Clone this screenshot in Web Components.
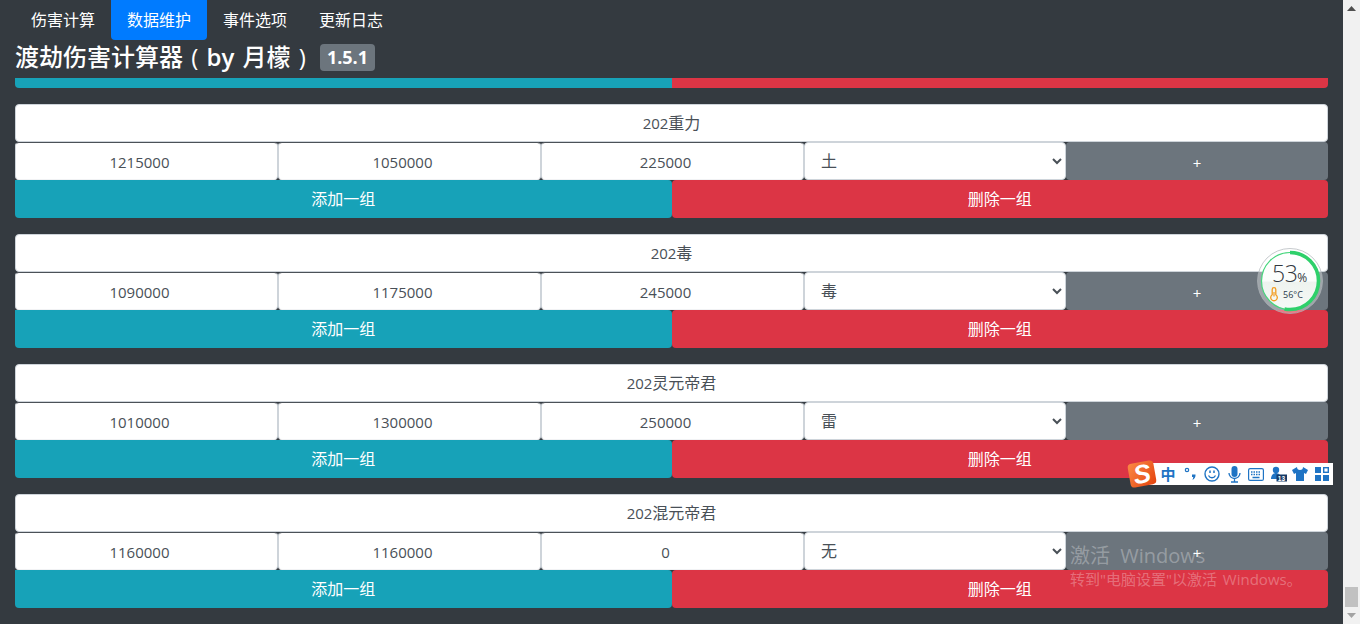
<!DOCTYPE html>
<html>
<head>
<meta charset="utf-8">
<title>渡劫伤害计算器</title>
<style>
  html, body { margin: 0; height: 100%; overflow: hidden; background: #343a40; }
  body { font-family: "Open Sans", "Noto Sans CJK SC", sans-serif; }
  #page { display: flex; height: 624px; }
  #main { flex: 1; min-width: 0; padding: 0 15px; overflow: hidden; }
</style>
</head>
<body>
<div id="page">
  <div id="main">
    <nav-tabs></nav-tabs>
    <page-title></page-title>
    <cut-bar></cut-bar>
    <boss-group level="202" name="重力" a="1215000" b="1050000" c="225000" el="土"></boss-group>
    <boss-group level="202" name="毒" a="1090000" b="1175000" c="245000" el="毒"></boss-group>
    <boss-group level="202" name="灵元帝君" a="1010000" b="1300000" c="250000" el="雷"></boss-group>
    <boss-group level="202" name="混元帝君" a="1160000" b="1160000" c="0" el="无"></boss-group>
  </div>
  <fake-scrollbar></fake-scrollbar>
</div>
<temp-widget></temp-widget>
<ime-bar></ime-bar>
<activate-mark></activate-mark>

<script>
class NavTabs extends HTMLElement {
  constructor() {
    super();
    this.attachShadow({ mode: "open" });
    this.shadowRoot.innerHTML = `
      <style>
        :host { display: flex; height: 40px; color: #fff; font-size: 16px; }
        a { display: block; padding: 0 16px; line-height: 40px; border-radius: 0 0 4px 4px; }
        a.active { background: #007bff; }
      </style>
      <a>伤害计算</a><a class="active">数据维护</a><a>事件选项</a><a>更新日志</a>
    `;
  }
}
customElements.define("nav-tabs", NavTabs);

class PageTitle extends HTMLElement {
  constructor() {
    super();
    this.attachShadow({ mode: "open" });
    this.shadowRoot.innerHTML = `
      <style>
        :host { box-sizing: border-box; display: flex; align-items: center; height: 38px; padding-bottom: 5px; color: #fff; font-size: 24px; font-weight: 500; word-spacing: 2px; white-space: pre; }
        .txt { position: relative; top: -1.5px; }
        b { font-weight: 600; }
        .ver { margin-left: 14px; position: relative; top: 1px; background: #6c757d; border-radius: 4px; font-size: 18px; font-weight: 700; line-height: 27px; padding: 0 7px; word-spacing: 0; }
      </style><span class="txt">渡劫伤害计算器 ( <b>by</b> 月檬 )</span><span class="ver">1.5.1</span>
    `;
  }
}
customElements.define("page-title", PageTitle);

class CutBar extends HTMLElement {
  constructor() {
    super();
    this.attachShadow({ mode: "open" });
    this.shadowRoot.innerHTML = `
      <style>
        :host { display: flex; height: 10px; margin-bottom: 16px; }
        div { flex: 1; }
        .l { background: #17a2b8; border-bottom-left-radius: 4px; }
        .r { background: #dc3545; border-bottom-right-radius: 4px; }
      </style>
      <div class="l"></div><div class="r"></div>
    `;
  }
}
customElements.define("cut-bar", CutBar);

class BossGroup extends HTMLElement {
  constructor() {
    super();
    this.attachShadow({ mode: "open" });
  }
  connectedCallback() {
    const v = (k) => this.getAttribute(k);
    this.shadowRoot.innerHTML = `
      <style>
        :host { display: block; margin-bottom: 16px; font-size: 16px; color: #495057; }
        .name, input, select, .plus, button { box-sizing: border-box; height: 38px; font: inherit; margin: 0; }
        .name { background: #fff; border: 1px solid #ced4da; border-radius: 4px; text-align: center; line-height: 36px; }
        .name span, input { font-size: 15px; }
        .row { display: grid; grid-template-columns: 263px 263px 263px 262px 262px; }
        input { width: 100%; min-width: 0; text-align: center; color: #495057; background: #fff; border: 1px solid #ced4da; border-top-color: #4b5157; border-bottom-color: #f1f2f4; border-radius: 4px; padding: 1px 26px 0 12px; }
        select { width: 100%; min-width: 0; color: #495057; background: #fff; border: 1px solid #ced4da; border-radius: 4px; padding: 0 12px; }
        .plus { background: #6c757d; color: #fff; text-align: center; line-height: 42px; border-radius: 4px; font-size: 15px; }
        .btns { display: grid; grid-template-columns: 1fr 1fr; }
        button { border: 0; color: #fff; padding: 0 0 2px; }
        .add { background: #17a2b8; border-radius: 0 4px 4px 4px; }
        .del { background: #dc3545; border-radius: 4px; }
      </style>
      <div class="name"><span>${v("level")}</span>${v("name")}</div>
      <div class="row">
        <input value="${v("a")}"><input value="${v("b")}"><input value="${v("c")}">
        <select><option>${v("el")}</option></select>
        <div class="plus">+</div>
      </div>
      <div class="btns"><button class="add">添加一组</button><button class="del">删除一组</button></div>
    `;
  }
}
customElements.define("boss-group", BossGroup);

class FakeScrollbar extends HTMLElement {
  constructor() {
    super();
    this.attachShadow({ mode: "open" });
    this.shadowRoot.innerHTML = `
      <style>
        :host { display: flex; flex-direction: column; justify-content: space-between; align-items: center; width: 17px; background: #f1f1f1; }
        .track { flex: 1; display: flex; flex-direction: column; justify-content: flex-end; width: 100%; }
        .thumb { height: 20px; margin: 0 2px; background: #c1c1c1; }
        svg { display: block; margin: 6px 0; }
      </style>
      <svg width="9" height="5"><path d="M0 5 4.500 0 9 5z" fill="#505050"/></svg>
      <div class="track"><div class="thumb"></div></div>
      <svg width="9" height="5"><path d="M0 0 4.500 5 9 0z" fill="#a3a3a3"/></svg>
    `;
  }
}
customElements.define("fake-scrollbar", FakeScrollbar);

class TempWidget extends HTMLElement {
  constructor() {
    super();
    this.attachShadow({ mode: "open" });
    this.shadowRoot.innerHTML = `
      <style>
        :host { position: absolute; left: 1257px; top: 248px; width: 66px; height: 66px; font-family: "Open Sans", sans-serif; color: #33383d; }
        svg { position: absolute; inset: 0; }
        .pct { position: absolute; left: 15px; top: 11px; font-size: 23px; font-weight: 300; line-height: 28px; letter-spacing: -.5px; }
        .pct small { font-size: 12px; letter-spacing: 0; font-weight: 400; }
        .deg { position: absolute; left: 26px; top: 41px; font-size: 9px; line-height: 12px; color: #2b3a4a; }
      </style>
      <svg width="66" height="66" viewBox="0 0 66 66">
        <defs>
          <linearGradient id="face" x1="0" y1="0" x2="0" y2="1">
            <stop offset="0" stop-color="#ffffff"/>
            <stop offset=".5" stop-color="#fbfdfb"/>
            <stop offset=".52" stop-color="#eef3ef"/>
            <stop offset="1" stop-color="#f6f9f6"/>
          </linearGradient>
        </defs>
        <circle cx="33" cy="33" r="32.500" fill="#fff" fill-opacity=".35" stroke="#aeb3b8" stroke-opacity=".7"/>
        <circle cx="33" cy="33" r="28.500" fill="url(#face)" stroke="#45d67c" stroke-width="1.200"/>
        <circle cx="33" cy="33" r="28.500" fill="none" stroke="#2ed06a" stroke-width="3.600" stroke-dasharray="94.900 84.200" transform="rotate(-90 33 33)"/>
        <path d="M15.200 41.500a1.800 1.800 0 0 1 3.600 0v5.200a3.300 3.300 0 1 1-3.600 0z" fill="none" stroke="#f39c1f" stroke-width="1.300"/>
        <path d="M17 44v4.500" stroke="#f39c1f" stroke-width="1.200"/>
      </svg>
      <div class="pct">53<small>%</small></div>
      <div class="deg">56°C</div>
    `;
  }
}
customElements.define("temp-widget", TempWidget);

class ImeBar extends HTMLElement {
  constructor() {
    super();
    this.attachShadow({ mode: "open" });
    this.shadowRoot.innerHTML = `
      <style>
        :host { position: absolute; left: 1129px; top: 461px; display: flex; align-items: center; width: 204px; height: 26px; }
        .bar { position: absolute; left: 17px; right: 0; top: 2px; height: 22px; background: #fff; }
        .logo { position: relative; width: 26px; height: 24px; flex: none; border-radius: 4px; background: linear-gradient(135deg, #fb8a45, #e4430e); transform: rotate(-10deg); color: #fff; font: italic 700 26px/24px "Liberation Sans", sans-serif; text-align: center; }
        .items { position: relative; display: flex; align-items: center; margin-left: 2px; color: #1f74c4; font: 700 15px/20px "Noto Sans CJK SC", sans-serif; }
        .items > * { width: 22px; display: flex; justify-content: center; }
        svg { display: block; }
      </style>
      <div class="bar"></div>
      <div class="logo">S</div>
      <div class="items">
        <span>中</span>
        <span><svg width="18" height="16" viewBox="0 0 18 16"><circle cx="6" cy="4" r="1.700" fill="none" stroke="#1f74c4" stroke-width="1.200"/><path d="M11 8.500h3.500c.3 2.500-1 4.500-3 5.500l.8-3H11z" fill="#1f74c4"/></svg></span>
        <span><svg width="16" height="16" viewBox="0 0 16 16"><circle cx="8" cy="8" r="7" fill="none" stroke="#1f74c4" stroke-width="1.400"/><path d="M6 4.500v2.500M10 4.500v2.500" stroke="#1f74c4" stroke-width="1.500"/><path d="M4.500 9.500c1.500 3 5.500 3 7 0" fill="none" stroke="#1f74c4" stroke-width="1.300"/></svg></span>
        <span><svg width="13" height="17" viewBox="0 0 13 17"><rect x="3.500" y="0" width="6" height="11" rx="3" fill="#1f74c4"/><path d="M1 7a5.500 5.500 0 0 0 11 0M6.500 13v3M3 16h7" fill="none" stroke="#1f74c4" stroke-width="1.300"/></svg></span>
        <span><svg width="16" height="13" viewBox="0 0 16 13"><rect x=".6" y=".6" width="14.800" height="11.800" rx="1.500" fill="none" stroke="#1f74c4" stroke-width="1.200"/><path d="M3 4h10M3 6.500h10" stroke="#1f74c4" stroke-dasharray="1.500 1" stroke-width="1.500"/><path d="M4.500 9.500h7" stroke="#1f74c4" stroke-width="1.500"/></svg></span>
        <span><svg width="17" height="16" viewBox="0 0 17 16"><circle cx="6" cy="4" r="3.200" fill="#1f74c4"/><path d="M1 13c0-8 10-8 10 0z" fill="#1f74c4"/><rect x="6.500" y="8.500" width="10.500" height="7" fill="#163a66"/><text x="7.800" y="14.700" font-size="6.500" font-family="Liberation Sans" fill="#fff">13</text></svg></span>
        <span><svg width="16" height="14" viewBox="0 0 16 14"><path d="M5 0 0 3l2 4 2-1v8h8V6l2 1 2-4-5-3a3 3 0 0 1-6 0z" fill="#1f74c4"/></svg></span>
        <span><svg width="14" height="14" viewBox="0 0 14 14"><rect width="6" height="6" fill="#1f74c4"/><rect x="8.700" y=".7" width="4.600" height="4.600" fill="none" stroke="#1f74c4" stroke-width="1.400"/><rect y="8" width="6" height="6" fill="#1f74c4"/><rect x="8" y="8" width="6" height="6" fill="#1f74c4"/></svg></span>
      </div>
    `;
  }
}
customElements.define("ime-bar", ImeBar);

class ActivateMark extends HTMLElement {
  constructor() {
    super();
    this.attachShadow({ mode: "open" });
    this.shadowRoot.innerHTML = `
      <style>
        :host { position: absolute; left: 1070px; top: 541px; color: rgba(255,255,255,.3); font-family: "Open Sans", "Noto Sans CJK SC", sans-serif; pointer-events: none; white-space: nowrap; }
        .big { font-size: 20px; line-height: 30px; word-spacing: 5px; }
        .small { font-size: 15px; line-height: 20px; margin-top: -2px; word-spacing: 2px; }
      </style>
      <div class="big">激活 Windows</div>
      <div class="small">转到"电脑设置"以激活 Windows。</div>
    `;
  }
}
customElements.define("activate-mark", ActivateMark);
</script>
</body>
</html>
